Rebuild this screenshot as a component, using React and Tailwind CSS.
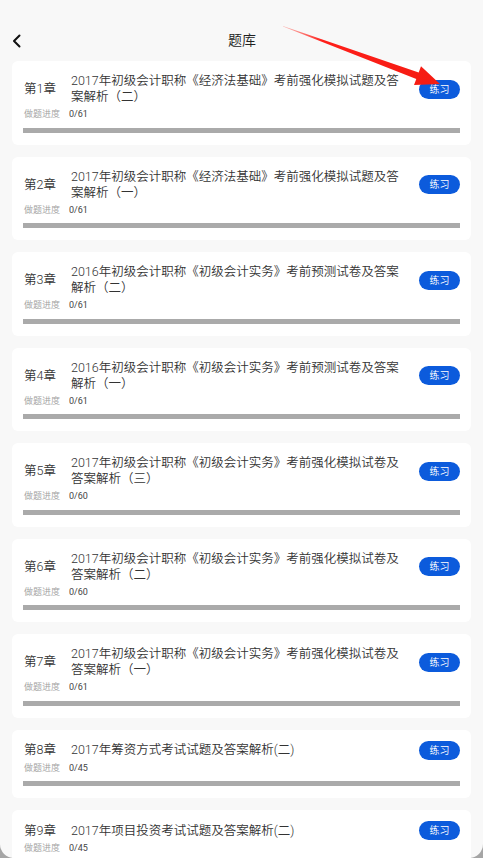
import React from 'react';

const chapters = [
  { no: 1, title: '2017年初级会计职称《经济法基础》考前强化模拟试题及答案解析（二）', done: 0, total: 61 },
  { no: 2, title: '2017年初级会计职称《经济法基础》考前强化模拟试题及答案解析（一）', done: 0, total: 61 },
  { no: 3, title: '2016年初级会计职称《初级会计实务》考前预测试卷及答案解析（二）', done: 0, total: 61 },
  { no: 4, title: '2016年初级会计职称《初级会计实务》考前预测试卷及答案解析（一）', done: 0, total: 61 },
  { no: 5, title: '2017年初级会计职称《初级会计实务》考前强化模拟试卷及答案解析（三）', done: 0, total: 60 },
  { no: 6, title: '2017年初级会计职称《初级会计实务》考前强化模拟试卷及答案解析（二）', done: 0, total: 60 },
  { no: 7, title: '2017年初级会计职称《初级会计实务》考前强化模拟试卷及答案解析（一）', done: 0, total: 61 },
  { no: 8, title: '2017年筹资方式考试试题及答案解析(二)', done: 0, total: 45 },
  { no: 9, title: '2017年项目投资考试试题及答案解析(二)', done: 0, total: 45 },
];

function ChapterCard({ item }) {
  return (
    <div className="bg-white rounded-[6px] px-[11px] pt-[12px] pb-[12px] shrink-0">
      {/* title row */}
      <div className="flex items-center">
        <div className="w-[48px] shrink-0 pl-px text-[12.5px] leading-[16px] font-[350] text-[#333]">
          第{item.no}章
        </div>
        <div className="flex-1 mr-[14px] text-[12.5px] leading-[16px] font-[350] text-[#333]">
          {item.title}
        </div>
        <button className="w-[41px] h-[19px] -my-[1px] shrink-0 rounded-full bg-[#0c5bdc] text-white text-[10px] leading-[19px] font-[350]">
          练习
        </button>
      </div>

      {/* progress text */}
      <div className="flex items-center mt-[4px] h-[12px] pl-px">
        <span className="w-[45px] text-[9px] text-[#a0a0a0] font-[350]">做题进度</span>
        <span className="text-[9px] text-[#444]">
          {item.done}/{item.total}
        </span>
      </div>

      {/* progress bar */}
      <div className="mt-[6.5px] h-[5px] bg-[#aaaaaa]">
        <div className="h-full bg-[#0c5bdc]" style={{ width: `${(item.done / item.total) * 100}%` }} />
      </div>
    </div>
  );
}

export default function App() {
  return (
    <div className="w-[483px] h-[858px] bg-[#a5a5a5]" style={{ fontFamily: 'Roboto, "Noto Sans CJK SC", sans-serif' }}>
      <div className="relative w-full h-full bg-[#f8f8f8] rounded-b-[14px] overflow-hidden">
        {/* header */}
        <div className="pt-[20px] h-[61px]">
          <div className="grid grid-cols-[1fr_auto_1fr] items-center h-[41px]">
            <div className="pl-[12px]">
              <svg width="9" height="14" viewBox="0 0 9 14" fill="none">
                <path d="M7.5 1.5 L2 7 L7.5 12.5" stroke="#111" strokeWidth="2" strokeLinecap="round" strokeLinejoin="round" />
              </svg>
            </div>
            <div className="text-[14px] text-[#222] pl-px font-[350]">题库</div>
            <div />
          </div>
        </div>

        {/* list */}
        <div className="flex flex-col gap-[12px] px-[12px]">
          {chapters.map((c) => (
            <ChapterCard key={c.no} item={c} />
          ))}
        </div>

        {/* red annotation arrow */}
        <svg className="absolute left-0 top-0 pointer-events-none" width="483" height="120" viewBox="0 0 483 120">
          <defs>
            <linearGradient id="arrowFade" x1="283" y1="26" x2="440" y2="84" gradientUnits="userSpaceOnUse">
              <stop offset="0" stopColor="#ff3b30" stopOpacity="0.3" />
              <stop offset="0.25" stopColor="#ff1f1a" />
              <stop offset="1" stopColor="#f41c12" />
            </linearGradient>
          </defs>
          <polygon
            points="283,26 418.7,72.4 421,66.3 440,84 414,85.1 416.3,79 283,26.6"
            fill="url(#arrowFade)"
          />
        </svg>
      </div>
    </div>
  );
}
